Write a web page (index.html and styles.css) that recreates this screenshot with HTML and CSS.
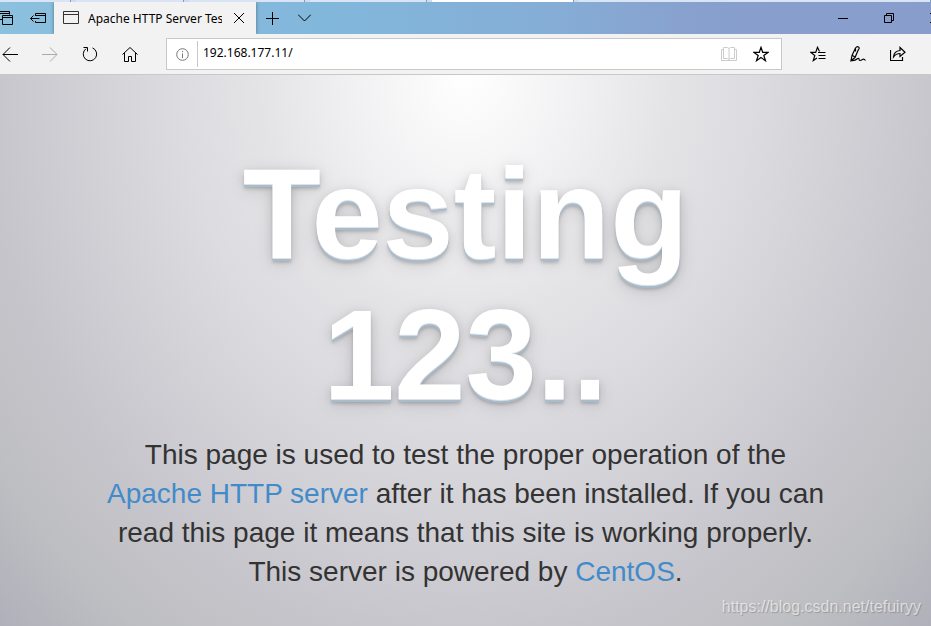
FILE: index.html
```
<!DOCTYPE html>
<html lang="en">
<head>
    <meta charset="UTF-8">
    <meta name="viewport" content="width=device-width, initial-scale=1.0">
    <title>Apache HTTP Server Test Page</title>
    <link rel="stylesheet" href="styles.css">
</head>
<body>
    <!-- tabs of the window behind -->
    <div class="back-tabs">
        <span></span><span></span><span></span><span></span><span class="active"></span><span></span>
    </div>

    <header class="title-bar">
        <div class="tab-tools">
            <button type="button" aria-label="Tabs you've set aside">
                <svg width="16" height="16" viewBox="0 0 16 16"><path d="M2.500 9.500v-8h10v3M2.500 3.500h10M5.500 14.500v-9h10v9zM5.500 7.500h10M0 9.500h5.500"/></svg>
            </button>
            <button type="button" aria-label="Set these tabs aside">
                <svg width="16" height="16" viewBox="0 0 16 16"><path d="M5.500 6V3.500h10v9h-10V11M5.500 5.500h10M.5 8.500h9M3.500 5.500l-3 3 3 3"/></svg>
            </button>
        </div>
        <div class="tab">
            <svg width="16" height="14" viewBox="0 0 16 14"><path d="M.5.5h15v12H.5zM.5 3.500h15"/></svg>
            <span class="tab-title">Apache HTTP Server Test Page</span>
            <button type="button" aria-label="Close tab">
                <svg width="10" height="10" viewBox="0 0 10 10"><path d="M0 0l10 10M10 0L0 10"/></svg>
            </button>
        </div>
        <div class="new-tab">
            <button type="button" aria-label="New tab">
                <svg width="13" height="13" viewBox="0 0 13 13"><path d="M6.500 0v13M0 6.500h13"/></svg>
            </button>
            <button type="button" aria-label="Show tab previews">
                <svg width="13" height="8" viewBox="0 0 13 8"><path d="M0 .5l6.500 6.500L13 .5"/></svg>
            </button>
        </div>
        <div class="window-buttons">
            <button type="button" aria-label="Minimize">
                <svg width="10" height="10" viewBox="0 0 10 10"><path d="M0 5.500h10"/></svg>
            </button>
            <button type="button" aria-label="Restore">
                <svg width="10" height="10" viewBox="0 0 10 10"><path d="M.5 2.500h7v7h-7zM2.500 2.500v-2h7v7h-2"/></svg>
            </button>
            <button type="button" aria-label="Close">
                <svg width="10" height="10" viewBox="0 0 10 10"><path d="M0 0l10 10M10 0L0 10"/></svg>
            </button>
        </div>
    </header>

    <nav class="toolbar">
        <div class="nav-buttons">
            <button type="button" aria-label="Back">
                <svg width="16" height="16" viewBox="0 0 16 16"><path d="M16 8.500H1M8 1.500l-7 7 7 7"/></svg>
            </button>
            <button type="button" aria-label="Forward" disabled>
                <svg width="16" height="16" viewBox="0 0 16 16"><path d="M0 8.500h15M8 1.500l7 7-7 7"/></svg>
            </button>
            <button type="button" aria-label="Refresh">
                <svg width="16" height="16" viewBox="0 0 16 16"><path d="M10.500 1.900a6.700 6.700 0 1 1-6.500.8M1.500 1.500h4v4"/></svg>
            </button>
            <button type="button" aria-label="Home">
                <svg width="16" height="16" viewBox="0 0 16 16"><path d="M.5 8.500L8 1.500l7.500 7M2.500 7v8.500h4v-5h3v5h4V7"/></svg>
            </button>
        </div>
        <form class="address-bar">
            <button type="button" class="info" aria-label="Site information">
                <svg width="13" height="13" viewBox="0 0 13 13"><circle cx="6.500" cy="6.500" r="5.800"/><path d="M6.500 5.500V10M6.500 3v1.200"/></svg>
            </button>
            <input type="text" aria-label="Address" value="192.168.177.11/">
            <button type="button" aria-label="Reading view" disabled>
                <svg width="16" height="14" viewBox="0 0 16 14"><path d="M2.500.5h4L8 1.500l1.500-1h4v11h-4l-1.500 1-1.500-1h-4zM8 1.500v11M2.500 2.500h-2v11h15v-11h-2"/></svg>
            </button>
            <button type="button" aria-label="Add to favorites">
                <svg class="bold" width="16" height="16" viewBox="0 0 16 16"><path d="M8 1.300l1.700 5H15.200l-4.400 3.200 1.700 5.200L8 11.500l-4.500 3.200 1.700-5.200L.8 6.300h5.500z"/></svg>
            </button>
        </form>
        <div class="hub-buttons">
            <button type="button" aria-label="Hub">
                <svg class="bold" width="16" height="16" viewBox="0 0 16 16"><path d="M9.500 5.500L7.500 1.300 5.700 6.400H.8l4 3.100-1.500 5L7 12M8 6.500h7.500M8.500 9.500h7M8.500 12.500h7"/></svg>
            </button>
            <button type="button" aria-label="Add notes">
                <svg class="bold" width="16" height="16" viewBox="0 0 16 16"><path d="M1 14.500l1-5L5.500 2Q7 0 8.500 1t-.3 3L5 11.500zM5.500 2.500v3M2.500 9.500l2.500 1.500M1 14.500q4 .5 6-1.500 2-1.500 2 0t1 1.500 2.500-1 3 1"/></svg>
            </button>
            <button type="button" aria-label="Share">
                <svg class="bold" width="16" height="16" viewBox="0 0 16 16"><path d="M.5 4v10.500h12V11M3.500 11q.5-6 6.500-6.500V1.500l5 4.700-5 4.300V7.500q-4 0-6.500 3.500z"/></svg>
            </button>
        </div>
    </nav>

    <main class="page">
        <div class="jumbotron">
            <h1>Testing 123..</h1>
            <p>This page is used to test the proper operation of the <a href="#">Apache HTTP server</a> after it has been installed. If you can read this page it means that this site is working properly. This server is powered by <a href="#">CentOS</a>.</p>
        </div>
        <div class="watermark">https://blog.csdn.net/tefuiryy</div>
    </main>
</body>
</html>
```
FILE: styles.css
```
* {
    box-sizing: border-box;
}

body {
    margin: 0;
    min-height: 100vh;
    display: flex;
    flex-direction: column;
    font-family: "Liberation Sans", Arial, sans-serif;
    color: #333;
    overflow-x: hidden;
}

button {
    display: flex;
    align-items: center;
    justify-content: center;
    flex: none;
    width: 40px;
    height: 32px;
    padding: 0;
    border: none;
    background: none;
    color: #000;
}

button:disabled {
    color: #aaa;
}

svg {
    display: block;
    flex: none;
    fill: none;
    stroke: currentColor;
    stroke-width: 1;
}

svg.bold {
    stroke-width: 1.2;
}

/* Window behind */
.back-tabs {
    display: grid;
    grid-template-columns: 71px 108px 116px 117px 142px 1fr;
    gap: 5px;
    height: 2px;
    background: #cfdcf0;
}

.back-tabs span {
    background: #d9e5f4;
    border-right: 1px solid #7d9cc0;
}

.back-tabs .active {
    background: #fff;
}

/* Title bar */
.title-bar {
    display: flex;
    height: 32px;
    background: linear-gradient(90deg, #8bc1de 0%, #82b7dc 35%, #85add5 60%, #88a0cd 75%, #889dcc 100%);
}

.tab-tools {
    display: flex;
    width: 54px;
}

.tab-tools button {
    width: 32px;
}

.tab-tools button:first-child {
    width: 22px;
    justify-content: flex-start;
}

.tab-tools button:first-child svg {
    margin-left: -3px;
}

.tab {
    display: flex;
    align-items: center;
    width: 202px;
    padding-left: 9px;
    background: #f2f2f2;
    box-shadow: 0 0 4px rgba(0, 0, 0, 0.4);
    clip-path: inset(0 -4px);
}

.tab-title {
    flex: 1;
    margin-left: 9px;
    overflow: hidden;
    white-space: nowrap;
    font-family: "Noto Sans", "Open Sans", sans-serif;
    font-size: 12px;
    color: #000;
}

.tab button {
    width: 34px;
}

.new-tab {
    display: flex;
}

.new-tab button {
    width: 32px;
}

.window-buttons {
    display: flex;
    margin-left: auto;
    margin-right: -27px;
}

.window-buttons button {
    width: 46px;
}

/* Navigation toolbar */
.toolbar {
    display: flex;
    align-items: center;
    height: 41px;
    background: #f2f2f2;
    border-bottom: 1px solid #c8c8c8;
}

.nav-buttons {
    display: flex;
    width: 166px;
}

.nav-buttons button:first-child {
    width: 30px;
    justify-content: flex-start;
}

.nav-buttons button:first-child svg {
    margin-left: 2px;
}

.address-bar {
    display: flex;
    align-items: center;
    flex: 1;
    height: 32px;
    padding-right: 4px;
    background: #fff;
    border: 1px solid #c8c8c8;
}

.address-bar button {
    width: 32px;
}

.address-bar .info {
    width: 31px;
    height: 26px;
    border-right: 1px solid #c8c8c8;
    color: #767676;
}

.address-bar input {
    flex: 1;
    min-width: 0;
    height: 28px;
    padding: 0 5px 4px;
    border: none;
    outline: none;
    background: none;
    font-family: "Noto Sans", "Open Sans", sans-serif;
    font-size: 12px;
    color: #000;
}

.address-bar button:disabled {
    color: #ccc;
}

.hub-buttons {
    display: flex;
    padding-left: 16px;
    padding-right: 13px;
}

/* Test page */
.page {
    position: relative;
    flex: 1;
    background: radial-gradient(ellipse at center top, #fff 0%, #f0f0f2 18%, #e4e4e6 31%, #dcdbe0 44%, #c6c5cb 73%, #bdbec2 87%, #b0b0ba 100%);
}

.jumbotron {
    max-width: 750px;
    margin: 0 auto;
    padding: 68px 15px 30px;
    text-align: center;
}

.jumbotron h1 {
    margin: 0;
    font-size: 128px;
    font-weight: 700;
    line-height: 141px;
    color: #fff;
    text-shadow: 0 1px 0 #dde3ea, 0 2px 0 #abc, 0 3px 0 #abc, 0 5px 3px rgba(0, 0, 0, 0.14), 0 3px 10px rgba(0, 0, 0, 0.12), 0 5px 20px rgba(0, 0, 0, 0.12);
}

.jumbotron p {
    margin: 10px 0 0;
    font-size: 28px;
    line-height: 39px;
}

.jumbotron a {
    color: #428bca;
    text-decoration: none;
}

.watermark {
    position: absolute;
    right: 10px;
    bottom: 10px;
    font-size: 16px;
    line-height: 18px;
    color: rgba(255, 255, 255, 0.6);
    text-shadow: 1px 1px 1px rgba(0, 0, 0, 0.2);
}
```
